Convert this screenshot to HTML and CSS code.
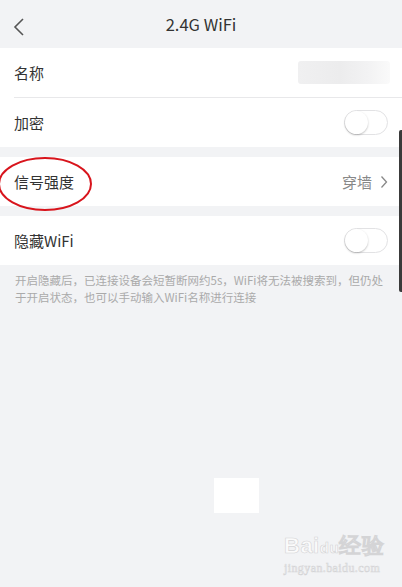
FILE: index.html
```html
<!DOCTYPE html>
<html>
<head>
  <meta charset="UTF-8">
  <title>2.4G WiFi</title>
  <link rel="stylesheet" href="styles.css">
</head>
<body>
  <div class="header">
    <svg class="back" width="12" height="20" viewBox="0 0 12 20">
      <path d="M10 2 L2 10 L10 18" fill="none" stroke="#555" stroke-width="1.6"/>
    </svg>
    <h1>2.4G WiFi</h1>
  </div>

  <div class="group">
    <div class="row">
      <span class="label">名称</span>
      <span class="blur"></span>
    </div>
    <div class="divider"></div>
    <div class="row">
      <span class="label">加密</span>
      <span class="switch"><span class="knob"></span></span>
    </div>
  </div>

  <div class="group">
    <div class="row">
      <span class="label">信号强度</span>
      <span class="value">穿墙
        <svg width="8" height="14" viewBox="0 0 8 14"><path d="M1.5 1.5 L6.5 7 L1.5 12.5" fill="none" stroke="#888" stroke-width="1.3"/></svg>
      </span>
    </div>
  </div>

  <div class="group">
    <div class="row">
      <span class="label">隐藏WiFi</span>
      <span class="switch"><span class="knob"></span></span>
    </div>
  </div>

  <p class="note">开启隐藏后，已连接设备会短暂断网约5s，WiFi将无法被搜索到，但仍处于开启状态，也可以手动输入WiFi名称进行连接</p>

  <div class="blank"></div>

  <div class="watermark">
    <div class="wm-logo">Bai<span class="wm-du">du</span>经验</div>
    <div class="wm-url">jingyan.baidu.com</div>
  </div>

  <svg class="circle-mark" width="100" height="60" viewBox="0 0 100 60">
    <ellipse cx="46" cy="29" rx="46" ry="26" fill="none" stroke="#d8141c" stroke-width="2"/>
  </svg>
  <div class="scrollbar"></div>
</body>
</html>
```

FILE: styles.css
```css
* {
  margin: 0;
  padding: 0;
  box-sizing: border-box;
}

body {
  font-family: "Noto Sans CJK SC", "Noto Sans", sans-serif;
  background: #f2f3f5;
  color: #333;
  width: 402px;
  height: 587px;
  overflow: hidden;
  position: relative;
}

.header {
  height: 48px;
  display: flex;
  align-items: center;
  justify-content: center;
  position: relative;
}

.header .back {
  position: absolute;
  left: 13px;
  top: 17px;
}

.header h1 {
  font-size: 16.5px;
  font-weight: 400;
  color: #333;
}

.group {
  background: #fff;
  margin-bottom: 10px;
}

.row {
  height: 49px;
  display: flex;
  align-items: center;
  justify-content: space-between;
  padding: 0 14px;
}

.label {
  font-size: 15px;
}

.divider {
  height: 1px;
  background: #e8e8ea;
  margin-left: 14px;
}

.blur {
  width: 92px;
  height: 23px;
  margin-right: -2px;
  border-radius: 3px;
  background: linear-gradient(90deg, #f0f0f1 0%, #ececed 45%, #f2f2f3 75%, #fafafa 100%);
}

.switch {
  width: 44px;
  height: 25px;
  border-radius: 13px;
  border: 1px solid #e2e2e4;
  background: #fff;
  display: flex;
  align-items: center;
}

.knob {
  width: 23px;
  height: 23px;
  border-radius: 50%;
  background: #fff;
  box-shadow: 0 1px 2px rgba(0, 0, 0, 0.25);
}

.value {
  display: flex;
  align-items: center;
  gap: 8px;
  font-size: 15px;
  color: #888;
}

.note {
  font-size: 11.5px;
  line-height: 17px;
  color: #aaa;
  padding: 0 15px 0 15px;
  margin-top: -3px;
}

.blank {
  width: 45px;
  height: 35px;
  background: #fff;
  margin: 172px 0 0 214px;
}

.watermark {
  position: absolute;
  left: 284px;
  top: 533px;
  color: #fbfbfb;
  -webkit-text-stroke: 0.6px #d4d4d6;
}

.wm-logo {
  font-family: "Liberation Sans", sans-serif;
  font-size: 22px;
  font-weight: 700;
  line-height: 26px;
  letter-spacing: 0.5px;
}

.wm-du {
  font-size: 15px;
}

.wm-url {
  font-family: "Liberation Serif", serif;
  font-size: 12px;
  line-height: 14px;
  letter-spacing: 0.4px;
}

.circle-mark {
  position: absolute;
  left: -1px;
  top: 155px;
}

.scrollbar {
  position: absolute;
  right: 0;
  top: 130px;
  width: 3px;
  height: 162px;
  background: #3a3a3a;
  border-radius: 2px 0 0 2px;
}
```
